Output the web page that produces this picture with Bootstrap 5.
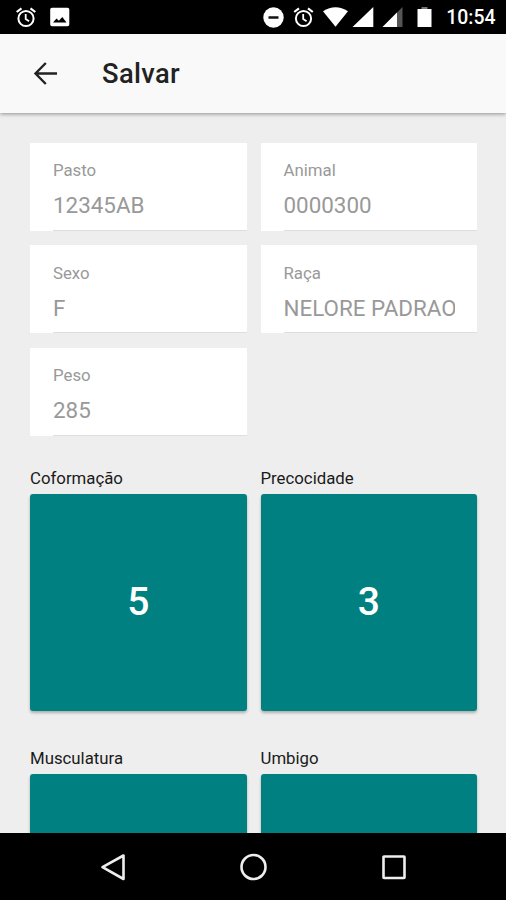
<!DOCTYPE html>
<html lang="pt-BR">
<head>
<meta charset="utf-8">
<meta name="viewport" content="width=device-width, initial-scale=1">
<title>Salvar</title>
<link href="https://cdn.jsdelivr.net/npm/bootstrap@5.3.0/dist/css/bootstrap.min.css" rel="stylesheet">
<style>
  body { font-family: Roboto, "Liberation Sans", sans-serif; background: #eee; color: #222; }
  svg { display: block; flex: none; }
  .screen { height: 900px; width: 506px; }
  .status-bar { height: 34px; padding: 0 10.5px 0 15px; }
  .status-left { gap: 13px; }
  .clock { font-size: 19.4px; font-weight: 500; line-height: 32px; margin-left: 14px; padding-top: 2px; }
  .app-bar { height: 79px; background: #f9f9f9; padding-left: 33px; box-shadow: 0 1px 4px rgba(0,0,0,.4); z-index: 1; }
  .app-bar svg { margin-bottom: 1px; }
  .app-title { font-size: 27.3px; font-weight: 500; margin-left: 44px; line-height: 1; letter-spacing: .35px; padding-top: 2px; }
  .content { padding: 29.5px 29px 0 30px; }
  .pair { --bs-gutter-x: 14px; --bs-gutter-y: 14.7px; }
  .field { height: 88px; padding: 17.4px 22px 0 23px; background: #fff linear-gradient(#dedede, #dedede) no-repeat 23px 100% / 100% 1px; }
  .field label { font-size: 16.8px; line-height: 20px; color: #999; }
  .field input { font-size: 22.4px; line-height: 30px; height: 30px; color: #999; margin-top: 10px; outline: 0; }
  .scores { margin-top: 32.2px; }
  .score-name { font-size: 16.8px; line-height: 20px; margin-bottom: 5.8px; color: #1a1a1a; }
  .score { height: 217px; background: #008080; border-radius: 3px; font-size: 39px; font-weight: 500; box-shadow: 0 2px 3px rgba(0,0,0,.27); }
  .score, .score:hover { color: #fff; }
  .scores + .scores { margin-top: 37.2px; }
  .nav-keys { height: 67px; }
</style>
</head>
<body>
<svg class="d-none">
  <symbol id="alarm" viewBox="0 0 21 21">
    <g fill="none" stroke="currentColor"><circle cx="10.5" cy="11.5" r="7.6" stroke-width="2"/><path d="M10.2 7v5l3.4 2.3" stroke-width="1.8"/><path d="M1.2 5 6 1.3M19.8 5 15 1.3" stroke-width="2.2"/></g>
  </symbol>
</svg>
<div class="screen d-flex flex-column overflow-hidden">
  <div class="status-bar d-flex align-items-center justify-content-between bg-black text-white flex-shrink-0">
    <div class="status-left d-flex align-items-center">
      <svg width="22" height="21"><use href="#alarm"/></svg>
      <svg width="20" height="20" viewBox="0 0 20 20"><path fill="#fff" fill-rule="evenodd" d="M2 .7h15.500q1.800 0 1.800 1.800v15q0 1.800-1.800 1.800H2q-1.800 0-1.800-1.800v-15Q.2.7 2 .7ZM3 15.500h13.500l-4.200-5.500-3.400 3.700-2.400-2.200Z"/></svg>
    </div>
    <div class="d-flex align-items-center">
      <svg class="me-1" width="21" height="21" viewBox="0 0 21 21"><circle cx="10.500" cy="10.500" r="10.200" fill="#fff"/><path d="M5.500 10.500h10" stroke="#111" stroke-width="2.500"/></svg>
      <svg class="ms-1 me-1" width="23" height="21"><use href="#alarm"/></svg>
      <svg class="ms-1" width="25" height="20" viewBox="0 0 25 20"><path fill="#fff" d="M0 4.200Q12.500-3.800 25 4.200L12.500 19.800Z"/></svg>
      <svg class="ms-1" width="22" height="20" viewBox="0 0 22 20"><path fill="#fff" d="M21.300 0v20H.5Z"/></svg>
      <svg class="ms-2" width="21" height="20" viewBox="0 0 21 20"><path fill="#555" d="M20.500 0v20H.5Z"/><path fill="#fff" d="M15 5.500V20H.5Z"/></svg>
      <svg width="29" height="20" viewBox="0 0 29 20"><path fill="#777" d="M18.500 0h6v3h-6z"/><path fill="#fff" d="M14.500 2h14v18h-14z"/></svg>
      <span class="clock">10:54</span>
    </div>
  </div>
  <header class="app-bar d-flex align-items-center flex-shrink-0 position-relative">
    <svg width="25" height="24" viewBox="0 0 25 24" fill="none" stroke="#222" stroke-width="2.400"><path d="M24 12.500H3M12.800 2 2.500 12.500 12.800 23"/></svg>
    <h1 class="app-title mb-0">Salvar</h1>
  </header>
  <main class="content flex-grow-1 overflow-hidden">
    <div class="row row-cols-2 pair mt-0">
      <div class="col mt-0"><div class="field d-flex flex-column"><label for="pasto">Pasto</label><input id="pasto" class="w-100 border-0 p-0 bg-transparent" value="12345AB" readonly></div></div>
      <div class="col mt-0"><div class="field d-flex flex-column"><label for="animal">Animal</label><input id="animal" class="w-100 border-0 p-0 bg-transparent" value="0000300" readonly></div></div>
      <div class="col"><div class="field d-flex flex-column"><label for="sexo">Sexo</label><input id="sexo" class="w-100 border-0 p-0 bg-transparent" value="F" readonly></div></div>
      <div class="col"><div class="field d-flex flex-column"><label for="raca">Raça</label><input id="raca" class="w-100 border-0 p-0 bg-transparent" value="NELORE PADRAO" readonly></div></div>
      <div class="col"><div class="field d-flex flex-column"><label for="peso">Peso</label><input id="peso" class="w-100 border-0 p-0 bg-transparent" value="285" readonly></div></div>
    </div>
    <div class="scores">
      <div class="row row-cols-2 pair gy-0">
        <div class="col"><div class="score-name">Coformação</div><button class="score btn w-100 border-0">5</button></div>
        <div class="col"><div class="score-name">Precocidade</div><button class="score btn w-100 border-0">3</button></div>
      </div>
    </div>
    <div class="scores">
      <div class="row row-cols-2 pair gy-0">
        <div class="col"><div class="score-name">Musculatura</div><button class="score btn w-100 border-0" aria-label="Musculatura"></button></div>
        <div class="col"><div class="score-name">Umbigo</div><button class="score btn w-100 border-0" aria-label="Umbigo"></button></div>
      </div>
    </div>
  </main>
  <nav class="nav-keys bg-black flex-shrink-0 d-flex justify-content-center align-items-center">
    <svg width="308" height="30" viewBox="0 0 308 30" fill="none" stroke="#eee" stroke-width="2.600" stroke-linejoin="round"><path d="M24.500 3.500v23.500L3.500 15.200Z"/><circle cx="154.500" cy="15" r="12"/><rect x="284.500" y="4.500" width="21" height="21.500" rx=".5"/></svg>
  </nav>
</div>
<script src="https://cdn.jsdelivr.net/npm/bootstrap@5.3.0/dist/js/bootstrap.bundle.min.js"></script>
</body>
</html>
